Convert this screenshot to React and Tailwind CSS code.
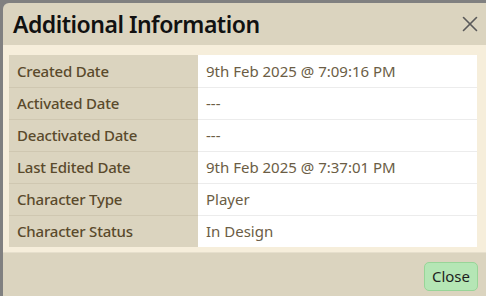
import { X } from "lucide-react";

const rows = [
  ["Created Date", "9th Feb 2025 @ 7:09:16 PM"],
  ["Activated Date", "---"],
  ["Deactivated Date", "---"],
  ["Last Edited Date", "9th Feb 2025 @ 7:37:01 PM"],
  ["Character Type", "Player"],
  ["Character Status", "In Design"],
];

export default function App() {
  return (
    <div
      className="h-[296px] w-[486px] overflow-hidden bg-[#808080] pl-[3px] pt-[3px]"
      style={{ fontFamily: '"Noto Sans", "Open Sans", sans-serif' }}
    >
      <div className="flex h-[310px] w-[500px] flex-col overflow-hidden rounded-tl-[6px] bg-[#dbd4bf]">
        <div className="flex h-[42px] shrink-0 items-center justify-between pl-[10px] pr-[20px]">
          <h2 className="text-[23px] font-semibold leading-none tracking-[-0.5px] text-[#111]">
            Additional Information
          </h2>
          <X size={26} strokeWidth={1.5} className="text-[#5a5a5a]" />
        </div>
        <div className="h-[208px] shrink-0 border-b border-[#e6dfcc] bg-[#f6eedb] pl-[6px] pt-[10px]">
          <table className="w-[468px] border-collapse text-[15px]">
            <tbody>
              {rows.map(([label, value], i) => (
                <tr key={label} className={i > 0 ? "border-t border-[#cfc7b1]" : ""}>
                  <td className="h-[32px] w-[189px] bg-[#dbd4bf] pl-[8px] font-medium tracking-[-0.2px] text-[#5a4a2c]">
                    {label}
                  </td>
                  <td
                    className={`h-[32px] bg-white pl-[8px] text-[#6b5d45] ${
                      i > 0 ? "border-t border-[#ececec]" : ""
                    }`}
                  >
                    {value}
                  </td>
                </tr>
              ))}
            </tbody>
          </table>
        </div>
        <div className="flex w-[486px] justify-end pr-[11px] pt-[9px]">
          <button className="h-[29px] rounded-[5px] border border-[#98d598] bg-[#b5e6b5] px-[7px] text-[15px] text-[#1e1e1e]">
            Close
          </button>
        </div>
      </div>
    </div>
  );
}
